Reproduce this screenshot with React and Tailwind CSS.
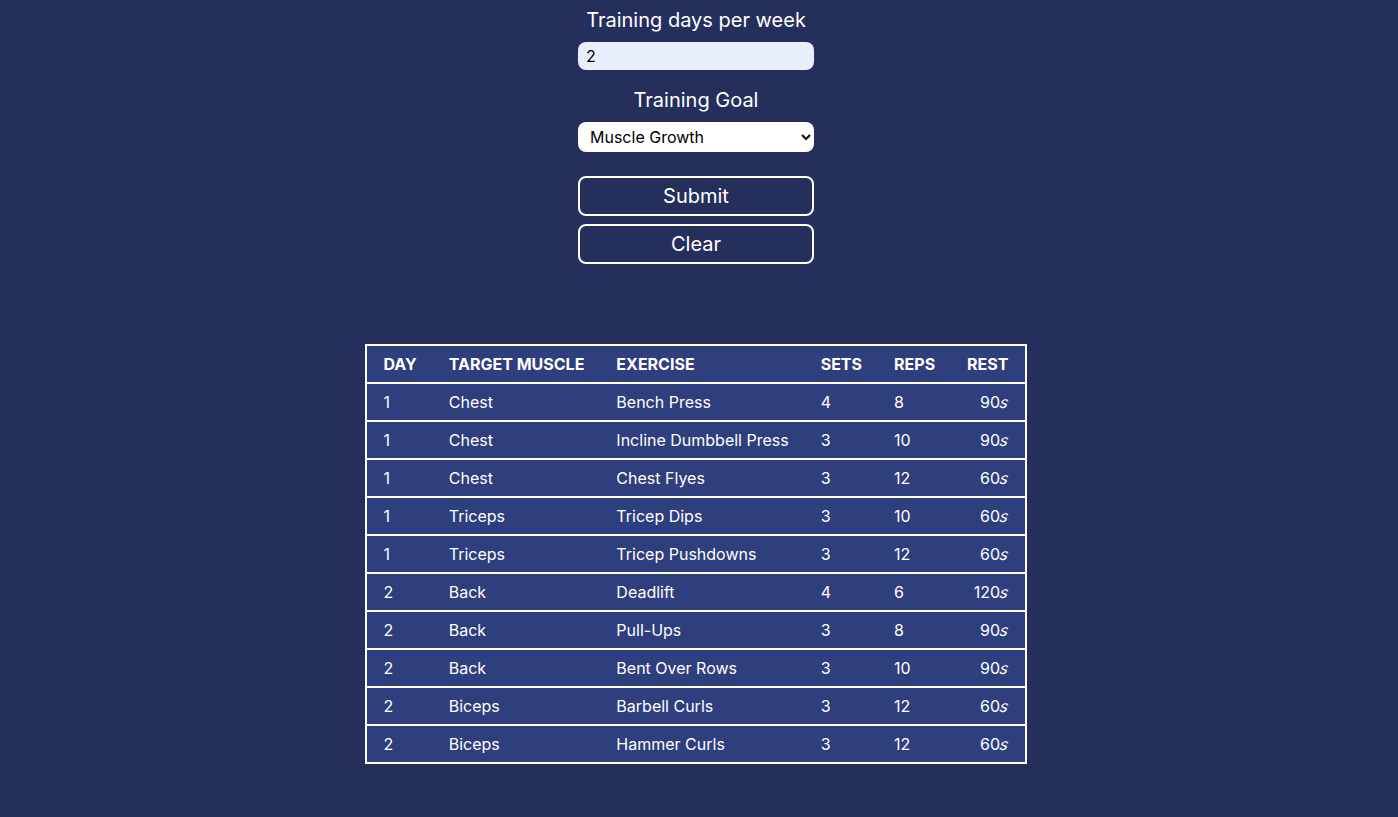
const workouts = [
  { day: 1, muscle: 'Chest', exercise: 'Bench Press', sets: 4, reps: 8, rest: 90 },
  { day: 1, muscle: 'Chest', exercise: 'Incline Dumbbell Press', sets: 3, reps: 10, rest: 90 },
  { day: 1, muscle: 'Chest', exercise: 'Chest Flyes', sets: 3, reps: 12, rest: 60 },
  { day: 1, muscle: 'Triceps', exercise: 'Tricep Dips', sets: 3, reps: 10, rest: 60 },
  { day: 1, muscle: 'Triceps', exercise: 'Tricep Pushdowns', sets: 3, reps: 12, rest: 60 },
  { day: 2, muscle: 'Back', exercise: 'Deadlift', sets: 4, reps: 6, rest: 120 },
  { day: 2, muscle: 'Back', exercise: 'Pull-Ups', sets: 3, reps: 8, rest: 90 },
  { day: 2, muscle: 'Back', exercise: 'Bent Over Rows', sets: 3, reps: 10, rest: 90 },
  { day: 2, muscle: 'Biceps', exercise: 'Barbell Curls', sets: 3, reps: 12, rest: 60 },
  { day: 2, muscle: 'Biceps', exercise: 'Hammer Curls', sets: 3, reps: 12, rest: 60 },
]

const App = () => {
  return (
    <div className="min-h-screen bg-[#242f5c] text-white font-['Inter',sans-serif] flex flex-col items-center pr-[6px] pt-[6px]">
      {/* Formulaire */}
      <div className="w-[236px] flex flex-col items-center">
        <label className="text-xl leading-7 mb-2">Training days per week</label>
        <input
          type="number"
          defaultValue={2}
          className="w-full h-7 rounded-lg bg-[#e8f0fe] text-black px-2 text-base outline-none"
        />

        <label className="text-xl leading-7 mt-4 mb-2">Training Goal</label>
        <select
          defaultValue="growth"
          className="w-full h-[30px] rounded-lg bg-white text-black pl-2 pr-1 text-base outline-none"
        >
          <option value="growth">Muscle Growth</option>
          <option value="strength">Strength</option>
          <option value="endurance">Endurance</option>
        </select>

        <button className="w-full h-10 mt-6 border-2 border-white rounded-lg text-xl">Submit</button>
        <button className="w-full h-10 mt-2 border-2 border-white rounded-lg text-xl">Clear</button>
      </div>

      {/* Programme */}
      <table className="mt-[80px] border-2 border-white bg-[#2f3e7c] text-base border-collapse">
        <thead>
          <tr className="border-b-2 border-white h-[38px]">
            <th className="px-4 text-left font-bold">DAY</th>
            <th className="px-4 text-left font-bold">TARGET MUSCLE</th>
            <th className="px-4 text-left font-bold">EXERCISE</th>
            <th className="px-4 text-left font-bold">SETS</th>
            <th className="px-4 text-left font-bold">REPS</th>
            <th className="px-4 text-right font-bold">REST</th>
          </tr>
        </thead>
        <tbody>
          {workouts.map((w, i) => (
            <tr key={i} className="border-b-2 border-white h-[38px]">
              <td className="px-4">{w.day}</td>
              <td className="px-4">{w.muscle}</td>
              <td className="px-4">{w.exercise}</td>
              <td className="px-4">{w.sets}</td>
              <td className="px-4">{w.reps}</td>
              <td className="px-4 text-right">
                {w.rest}
                <i className="inline-block -skew-x-12">s</i>
              </td>
            </tr>
          ))}
        </tbody>
      </table>
    </div>
  )
}

export default App
